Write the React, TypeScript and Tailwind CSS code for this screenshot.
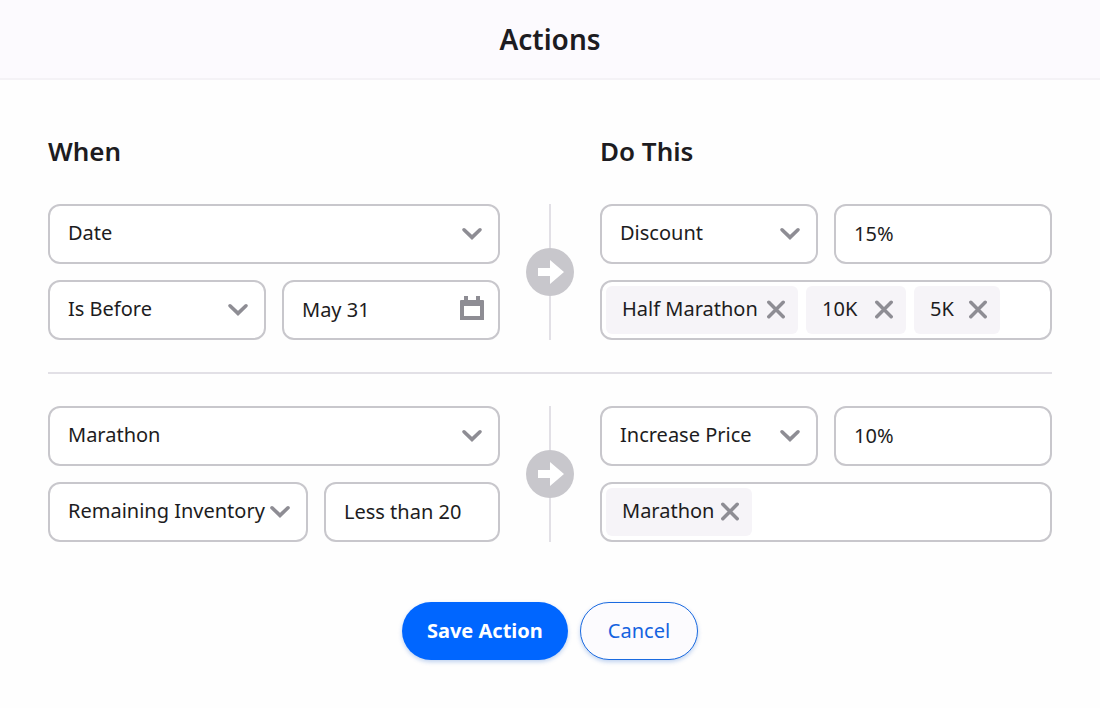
import { useState, type ReactNode } from "react";

const fieldBox =
  "h-15 w-full min-w-0 rounded-xl border-2 border-[#c8c7cc] bg-white pl-[18px] pb-0.5 text-xl text-[#1d1c21] outline-none focus:border-[#0066ff]";

function ChevronIcon() {
  return (
    <svg className="size-6" viewBox="0 0 24 24" fill="none" stroke="#8e8d94" strokeWidth="3.6" strokeLinecap="round" aria-hidden="true">
      <path d="M4 7.8l8 7.6 8-7.6" strokeLinejoin="miter" />
    </svg>
  );
}

function CalendarIcon() {
  return (
    <svg className="mb-1 size-6" viewBox="0 0 24 24" fill="#8e8d94" aria-hidden="true">
      <path fillRule="evenodd" d="M4 0h4v4h8V0h4v4h3a1 1 0 0 1 1 1v19H0V5a1 1 0 0 1 1-1h3zM4 10v10h16V10z" />
    </svg>
  );
}

function CloseIcon() {
  return (
    <svg className="size-5" viewBox="0 0 20 20" fill="none" stroke="#8e8d94" strokeWidth="3.5" strokeLinecap="round" aria-hidden="true">
      <path d="M2.8 2.3l14.4 14.4M17.2 2.3L2.8 16.7" />
    </svg>
  );
}

function ArrowIcon() {
  return (
    <svg className="size-12" viewBox="0 0 48 48" aria-hidden="true">
      <circle cx="24" cy="24" r="24" fill="#c8c7cc" />
      <path d="M12 20h12v-8l14 12-14 12v-8H12z" fill="#fff" />
    </svg>
  );
}

function Select({ label, options }: { label: string; options: string[] }) {
  return (
    <div className="grid items-center">
      <select aria-label={label} className={`${fieldBox} col-start-1 row-start-1 appearance-none pr-9`}>
        {options.map((o) => (
          <option key={o}>{o}</option>
        ))}
      </select>
      <span className="pointer-events-none col-start-1 row-start-1 mr-4 justify-self-end">
        <ChevronIcon />
      </span>
    </div>
  );
}

function TextField({ label, value, icon }: { label: string; value: string; icon?: ReactNode }) {
  return (
    <div className="grid items-center">
      <input aria-label={label} defaultValue={value} className={`${fieldBox} col-start-1 row-start-1 pr-4`} />
      {icon && <span className="pointer-events-none col-start-1 row-start-1 mr-4 justify-self-end">{icon}</span>}
    </div>
  );
}

type Tag = { name: string; width: string };

function TagField({ initial }: { initial: Tag[] }) {
  const [tags, setTags] = useState(initial);
  return (
    <ul className="flex min-h-15 flex-wrap gap-2 rounded-xl border-2 border-[#c8c7cc] bg-white p-1">
      {tags.map((tag) => (
        <li key={tag.name} className={`flex h-12 items-center justify-between rounded-md bg-[#f6f4f8] pr-3 pl-4 ${tag.width}`}>
          <span className="pb-0.5 text-xl text-[#1d1c21]">{tag.name}</span>
          <button type="button" aria-label={`Remove ${tag.name}`} onClick={() => setTags(tags.filter((t) => t !== tag))}>
            <CloseIcon />
          </button>
        </li>
      ))}
    </ul>
  );
}

function Rule({ condition, action }: { condition: ReactNode; action: ReactNode }) {
  return (
    <div className="grid grid-cols-[1fr_100px_1fr]">
      <div className="flex min-w-0 flex-col gap-4">{condition}</div>
      <div className="flex flex-col items-center">
        <span className="w-0.5 flex-1 bg-[#e2e0e6]" />
        <ArrowIcon />
        <span className="w-0.5 flex-1 bg-[#e2e0e6]" />
      </div>
      <div className="flex min-w-0 flex-col gap-4">{action}</div>
    </div>
  );
}

export default function App() {
  return (
    <div className="min-h-screen bg-[#fefefe] font-['Noto_Sans',sans-serif] text-[#1d1c21]">
      <header className="flex h-20 items-center justify-center border-b-2 border-[#f4f2f6] bg-[#fcfafe]">
        <h1 className="text-[28px] font-semibold">Actions</h1>
      </header>
      <main className="px-12 pt-[52px]">
        <div className="grid grid-cols-[1fr_100px_1fr] pb-[34px] text-[26px] leading-[38px] font-semibold">
          <h2>When</h2>
          <h2 className="col-start-3">Do This</h2>
        </div>
        <form onSubmit={(e) => e.preventDefault()}>
          <Rule
            condition={
              <>
                <Select label="Condition subject" options={["Date", "Marathon", "Remaining Inventory"]} />
                <div className="grid grid-cols-2 gap-4">
                  <Select label="Comparison" options={["Is Before", "Is After"]} />
                  <TextField label="Condition date" value="May 31" icon={<CalendarIcon />} />
                </div>
              </>
            }
            action={
              <>
                <div className="grid grid-cols-2 gap-4">
                  <Select label="Action type" options={["Discount", "Increase Price"]} />
                  <TextField label="Discount amount" value="15%" />
                </div>
                <TagField
                  initial={[
                    { name: "Half Marathon", width: "min-w-48" },
                    { name: "10K", width: "min-w-25" },
                    { name: "5K", width: "min-w-[86px]" },
                  ]}
                />
              </>
            }
          />
          <hr className="my-8 border-t-2 border-[#e2e0e6]" />
          <Rule
            condition={
              <>
                <Select label="Condition subject" options={["Marathon", "Date"]} />
                <div className="grid grid-cols-[260fr_176fr] gap-4">
                  <Select label="Condition measure" options={["Remaining Inventory", "Sold"]} />
                  <TextField label="Threshold" value="Less than 20" />
                </div>
              </>
            }
            action={
              <>
                <div className="grid grid-cols-2 gap-4">
                  <Select label="Action type" options={["Increase Price", "Discount"]} />
                  <TextField label="Increase amount" value="10%" />
                </div>
                <TagField initial={[{ name: "Marathon", width: "min-w-[146px]" }]} />
              </>
            }
          />
          <div className="flex justify-center gap-3 pt-15 pb-12 text-xl">
            <button type="submit" className="h-[58px] rounded-full bg-[#0066ff] px-[25px] font-bold text-white shadow-[0_2px_4px_rgba(0,80,200,0.25)]">
              Save Action
            </button>
            <button type="button" className="h-[58px] rounded-full border border-[#1a6ae0] bg-[#fcfbfe] px-[27px] text-[#1463e0] shadow-[0_2px_4px_rgba(0,80,200,0.25)]">
              Cancel
            </button>
          </div>
        </form>
      </main>
    </div>
  );
}
